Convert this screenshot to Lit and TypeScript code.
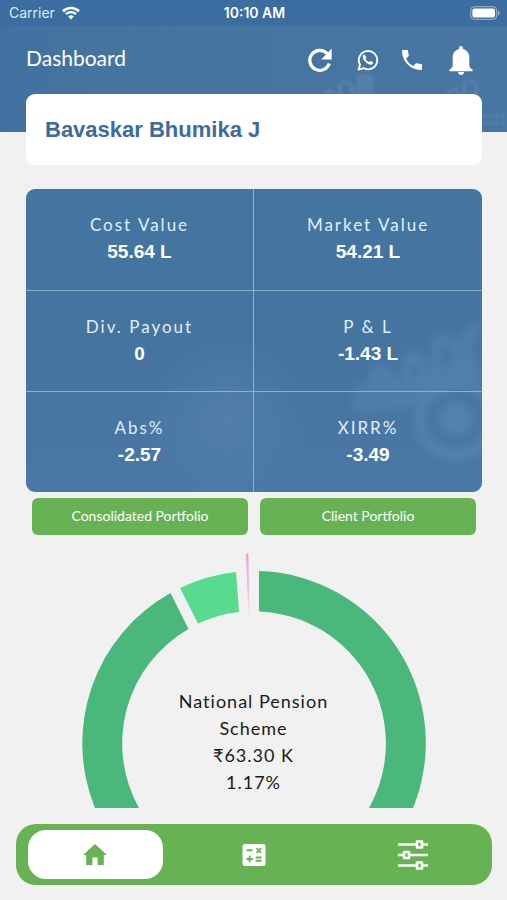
import { LitElement, html, css, svg } from "lit";
import { customElement, state } from "lit/decorators.js";

interface Stat {
  label: string;
  value: string;
}

const STATS: Stat[] = [
  { label: "Cost Value", value: "55.64 L" },
  { label: "Market Value", value: "54.21 L" },
  { label: "Div. Payout", value: "0" },
  { label: "P & L", value: "-1.43 L" },
  { label: "Abs%", value: "-2.57" },
  { label: "XIRR%", value: "-3.49" },
];

const icons = {
  wifi: html`<svg width="18" height="14" viewBox="0 0 18 14" fill="none" stroke="#fff" aria-hidden="true">
    <path d="M1 5.2a11.6 11.6 0 0 1 16 0" stroke-width="2.6" />
    <path d="M3.9 8.2a7.4 7.4 0 0 1 10.2 0" stroke-width="2.4" />
    <path d="M9 13.4 6.2 10.6a4 4 0 0 1 5.6 0Z" fill="#fff" stroke="none" />
  </svg>`,
  battery: html`<svg width="30" height="14" viewBox="0 0 30 14" aria-hidden="true">
    <rect x="0.7" y="0.7" width="26" height="12.6" rx="3.6" fill="none" stroke="#fff" stroke-opacity=".5" />
    <rect x="2.4" y="2.4" width="22.6" height="9.2" rx="2" fill="#fff" />
    <path d="M28 4.6v4.8c1-.4 1.6-1.4 1.6-2.4s-.6-2-1.6-2.4Z" fill="#fff" fill-opacity=".5" />
  </svg>`,
  refresh: html`<svg width="24" height="24" viewBox="0 0 24 24" aria-hidden="true">
    <path d="M19.2 5.6A10 10 0 1 0 21.3 15.5" fill="none" stroke="#fff" stroke-width="3.2" />
    <path d="M23.7.6v11H13.2Z" fill="#fff" />
  </svg>`,
  whatsapp: html`<svg width="22" height="22" viewBox="0 0 22 22" aria-hidden="true">
    <path d="M1.6 20.6 3 15.6A9.2 9.2 0 1 1 6.6 19.2Z" fill="none" stroke="#fff" stroke-width="1.9" stroke-linejoin="round" />
    <path d="M7.8 5.9c-.4-.3-.9-.2-1.3.2C4.900 7.700 6 10.300 8.300 12.700c2.500 2.600 5.600 3.900 7.200 2.400.7-.7.9-1.500.5-1.900l-2.300-1.200c-.7-.2-1.100 1-1.700 1-1.400-.5-2.900-1.900-3.500-3.200.1-.6 1-1 .8-1.600Z" fill="#fff" />
  </svg>`,
  phone: html`<svg width="20" height="20" viewBox="3 3 18 18" aria-hidden="true">
    <path d="M6.620 10.790c1.440 2.830 3.760 5.140 6.590 6.590l2.200-2.200c.27-.27.67-.36 1.020-.24 1.120.37 2.330.57 3.570.57.55 0 1 .45 1 1V20c0 .55-.45 1-1 1-9.390 0-17-7.610-17-17 0-.55.45-1 1-1h3.500c.55 0 1 .45 1 1 0 1.250.2 2.450.57 3.570.11.35.03.74-.25 1.020Z" fill="#fff" />
  </svg>`,
  bell: html`<svg width="24" height="29" viewBox="0 0 24 29" aria-hidden="true">
    <path d="M12 0c1.200 0 2 .9 2 2v.9c3.900 1 6.300 4.200 6.300 8.200v8.300c.2 1.800 1.500 3.200 3.300 4.200v1.700H.4v-1.700c1.800-1 3.100-2.400 3.300-4.200v-8.300c0-4 2.400-7.200 6.300-8.200V2c0-1.100.8-2 2-2Z" fill="#fff" />
    <path d="M9 26.100h6c0 1.700-1.300 2.900-3 2.900s-3-1.200-3-2.900Z" fill="#fff" />
  </svg>`,
  home: html`<svg width="24" height="21" viewBox="0 0 24 21" aria-hidden="true">
    <path d="M12 0 0 11h3.200v10h6.200v-7.600h5.200V21h6.200V11H24Z" fill="currentColor" />
  </svg>`,
  calculator: html`<svg width="24" height="24" viewBox="0 0 24 24" aria-hidden="true">
    <rect x="0.5" y="1" width="23" height="22" rx="2.5" fill="#fff" />
    <path d="M4.500 7.300h6M4.500 16h6.400M7.700 12.800v6.400M13.700 14.500h6M13.700 17.800h6M14.500 5.200l4.600 4.600M19.100 5.200l-4.600 4.600" fill="none" stroke="#67b354" stroke-width="1.9" />
  </svg>`,
  sliders: html`<svg width="30" height="30" viewBox="0 0 30 30" fill="none" stroke="#fff" aria-hidden="true">
    <path d="M0 4.500h18.500M25 4.500h5M0 15h5.500M12 15h18M0 25.500h18.500M25 25.500h5" stroke-width="2.4" />
    <path d="M19 1.500h5v6h-5zM6 12h5v6H6zM19 22.500h5v6h-5z" stroke-width="2.6" stroke-linejoin="round" />
  </svg>`,
};

const OUTER = 172;
const INNER = 132;

/* Ring slice between two edges; each edge is [outer x, outer y, inner x, inner y]. */
function slice(from: number[], to: number[], fill: string) {
  const d =
    `M${from[0]} ${from[1]}A${OUTER} ${OUTER} 0 0 1 ${to[0]} ${to[1]}` +
    `L${to[2]} ${to[3]}A${INNER} ${INNER} 0 0 0 ${from[2]} ${from[3]}Z`;
  return svg`<path d=${d} fill=${fill} />`;
}

@customElement("allocation-chart")
export class AllocationChart extends LitElement {
  static styles = css`
    :host {
      display: grid;
    }
    .ring,
    .caption {
      grid-area: 1 / 1;
    }
    .ring {
      display: block;
      width: 100%;
      height: auto;
    }
    .caption {
      align-self: end;
      justify-self: center;
      width: 180px;
      margin: 0 0 12px;
      text-align: center;
      font: 18px/27px Lato, sans-serif;
      letter-spacing: 1px;
      color: #1a1a1a;
    }
    .line {
      display: block;
    }
  `;

  render() {
    return html`
      <svg class="ring" viewBox="0 0 507 261" role="img" aria-label="Portfolio allocation">
        <defs>
          <linearGradient id="sliver" x1="0" y1="0" x2="0" y2="1">
            <stop offset="0" stop-color="#eaa6d8" />
            <stop offset="0.5" stop-color="#eeb8df" />
            <stop offset="1" stop-color="#f1e8ef" />
          </linearGradient>
        </defs>
        ${slice([95, 261, 139, 261], [170.5, 46, 188.5, 82], "#4ab77b")}
        ${slice([180, 41, 198, 76.5], [236, 25, 239, 65], "#58da8f")}
        ${slice([259, 24, 259, 64.5], [413, 261, 369, 261], "#4ab77b")}
        <path d="M245.8 7q1.200-1.500 2.600 0L249.500 72H248.700Z" fill="url(#sliver)" />
      </svg>
      <p class="caption">
        <span class="line">National Pension Scheme</span>
        <span class="line">₹63.30 K</span>
        <span class="line">1.17%</span>
      </p>
    `;
  }
}

@customElement("app-root")
export class AppRoot extends LitElement {
  @state() private tab = "home";

  static styles = css`
    :host {
      display: flex;
      flex-direction: column;
      min-height: 100vh;
      background: #f1f1f1;
      font-family: Lato, sans-serif;
      color: #fff;
    }
    * {
      box-sizing: border-box;
    }
    svg {
      display: block;
    }
    button {
      border: 0;
      padding: 0;
      background: none;
      color: inherit;
      font: inherit;
      cursor: pointer;
    }
    .header {
      position: relative;
      background: linear-gradient(90deg, #4071a2, #4674a0 20%, #4776a3);
      padding-bottom: 38px;
    }
    .status {
      display: grid;
      grid-template-columns: 1fr auto 1fr;
      align-items: center;
      height: 26px;
      padding: 0 7px 0 9px;
      background: #3b6da0;
      font: 14px/26px Inter, sans-serif;
    }
    .carrier {
      display: flex;
      align-items: center;
      gap: 7px;
      color: #dfe9f3;
    }
    .clock {
      font-weight: 600;
    }
    .battery {
      justify-self: end;
    }
    .bar {
      position: relative;
      display: flex;
      align-items: center;
      justify-content: space-between;
      height: 68px;
      padding: 0 20px 0 26px;
    }
    .title {
      margin: 0 0 4px;
      font-size: 21px;
      line-height: 28px;
      font-weight: 400;
    }
    .actions {
      display: flex;
      align-items: center;
    }
    .action {
      display: grid;
      place-items: center;
      width: 44px;
      height: 36px;
    }
    .action:first-child,
    .action:last-child {
      width: 53px;
    }
    .art {
      position: absolute;
      right: 0;
      bottom: 0;
    }
    .client {
      position: relative;
      margin: -38px 25px 24px 26px;
      padding: 22px 19px;
      border-radius: 9px;
      background: #fff;
      color: #3c6c9f;
      font: bold 22px/27px "Liberation Sans", sans-serif;
    }
    .panel {
      position: relative;
      margin: 0 25px 6px 26px;
      border-radius: 9px;
      overflow: hidden;
      background: radial-gradient(circle at 44% 76%, #517fa9, transparent 24%),
        linear-gradient(#4474a0, #4574a1 60%, #4a79a6);
    }
    .stats {
      position: relative;
      display: grid;
      grid-template-columns: 1fr 1fr;
      margin: 0;
    }
    .stat {
      height: 101px;
      padding-top: 22px;
      text-align: center;
      border: 0 solid #8fb0cd;
    }
    .stat:nth-child(odd) {
      border-right-width: 1px;
    }
    .stat:nth-child(n + 3) {
      border-top-width: 1px;
    }
    .stat-label {
      font-size: 17px;
      line-height: 27px;
      letter-spacing: 2px;
      color: #e3edf6;
    }
    .stat-value {
      margin: 0;
      font: bold 19px/27px "Liberation Sans", sans-serif;
    }
    .portfolios {
      display: grid;
      grid-template-columns: 1fr 1fr;
      gap: 12px;
      margin: 0 31px 12px 32px;
    }
    .portfolio {
      height: 37px;
      padding-bottom: 2px;
      border-radius: 6px;
      background: #67b354;
      font-size: 14px;
    }
    .nav {
      display: grid;
      grid-template-columns: repeat(3, 1fr);
      margin: auto 15px 15px 16px;
      border-radius: 20px;
      background: #67b354;
    }
    .tab {
      display: grid;
      place-items: center;
      height: 49px;
      margin: 6px 12px;
      border-radius: 18px;
    }
    .tab.active {
      background: #fff;
      color: #67b354;
    }
  `;

  private renderTab(id: string, label: string) {
    const active = this.tab === id;
    return html`<button
      class="tab ${active ? "active" : ""}"
      aria-label=${label}
      @click=${() => (this.tab = id)}
    >
      ${icons[id as keyof typeof icons]}
    </button>`;
  }

  render() {
    return html`
      <header class="header">
        <svg class="art" width="320" height="70" viewBox="0 0 320 70" fill="none" stroke="#7fa6c6" aria-hidden="true">
          <defs>
            <filter id="haze"><feGaussianBlur stdDeviation="1" /></filter>
          </defs>
          <g opacity=".22" stroke-width="4" filter="url(#haze)">
            <rect x="171" y="14" width="14" height="60" rx="4" fill="#7fa6c6" />
            <rect x="153" y="20" width="12" height="52" rx="6" />
            <rect x="137" y="29" width="10" height="44" rx="5" />
            <rect x="277" y="19" width="12" height="52" rx="5" />
            <rect x="261" y="28" width="12" height="44" rx="6" />
            <path d="M296 54h24M296 61h24" stroke-dasharray="4 2" />
          </g>
        </svg>
        <div class="status">
          <span class="carrier">Carrier ${icons.wifi}</span>
          <span class="clock">10:10 AM</span>
          <span class="battery">${icons.battery}</span>
        </div>
        <div class="bar">
          <h1 class="title">Dashboard</h1>
          <div class="actions">
            <button class="action" aria-label="Refresh">${icons.refresh}</button>
            <button class="action" aria-label="WhatsApp">${icons.whatsapp}</button>
            <button class="action" aria-label="Call">${icons.phone}</button>
            <button class="action" aria-label="Notifications">${icons.bell}</button>
          </div>
        </div>
      </header>

      <div class="client">Bavaskar Bhumika J</div>

      <section class="panel">
        <svg class="art" width="160" height="190" viewBox="0 0 160 190" aria-hidden="true">
          <defs>
            <filter id="soft"><feGaussianBlur stdDeviation="4" /></filter>
          </defs>
          <g filter="url(#soft)" fill="none" stroke="#6f9dc0" opacity=".32">
            <circle cx="134" cy="117" r="12" fill="#6f9dc0" stroke-width="10" />
            <circle cx="134" cy="117" r="36" stroke-width="10" />
            <path d="M52 88V76q0-8 8-8t8 8v12M84 84V62q0-8 8-8t8 8v24M114 76V48q0-10 10-10t10 10v30M146 70V36q0-8 14-12" stroke-width="9" />
            <path d="M30 96Q90 100 158 62" stroke-width="28" opacity=".7" />
          </g>
        </svg>
        <dl class="stats">
          ${STATS.map(
            (s) => html`<div class="stat">
              <dt class="stat-label">${s.label}</dt>
              <dd class="stat-value">${s.value}</dd>
            </div>`
          )}
        </dl>
      </section>

      <div class="portfolios">
        <button class="portfolio">Consolidated Portfolio</button>
        <button class="portfolio">Client Portfolio</button>
      </div>

      <allocation-chart></allocation-chart>

      <nav class="nav" aria-label="Main">
        ${this.renderTab("home", "Home")} ${this.renderTab("calculator", "Calculators")}
        ${this.renderTab("sliders", "Settings")}
      </nav>
    `;
  }
}
